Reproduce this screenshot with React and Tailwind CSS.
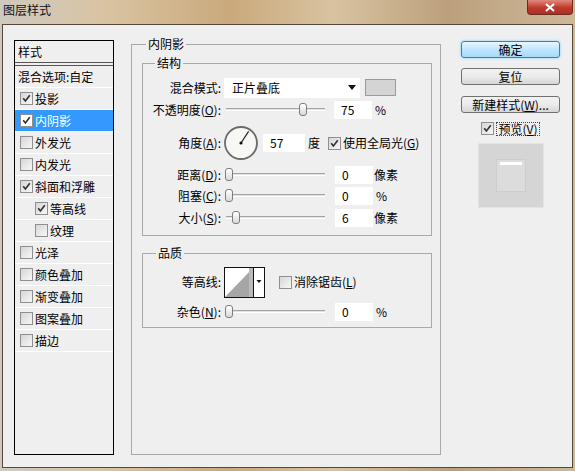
import React from "react";

function Cb({ checked, white }) {
  return (
    <span
      className={
        white
          ? "inline-flex w-[13px] h-[13px] shrink-0 items-center justify-center border border-[#8f8f8f] bg-white"
          : "inline-flex w-[13px] h-[13px] shrink-0 items-center justify-center border border-[#8f8f8f] bg-[linear-gradient(135deg,#d6d6d6,#f7f7f7)]"
      }
    >
      {checked && (
        <svg width="9" height="9" viewBox="0 0 9 9">
          <path d="M1.2 4.3 L3.4 7 L7.8 1.3" stroke="#333" strokeWidth="1.7" fill="none" />
        </svg>
      )}
    </span>
  );
}

function Slider({ thumb }) {
  return (
    <div className="relative w-[101px] h-[16px] ml-[3px] shrink-0">
      <div className="absolute left-[2px] right-0 top-[6px] h-[3px] border-t border-[#a3a3a3] border-b border-b-white bg-[#e2e2e2]" />
      <div
        className={
          "absolute top-[1px] w-[8px] h-[13px] rounded-[3px] border border-[#7d7d7d] bg-[linear-gradient(180deg,#ffffff,#d9d9d9)] " +
          thumb
        }
      />
    </div>
  );
}

function Field({ value, ml }) {
  return (
    <div className={"w-[38px] h-[18px] bg-white pl-[7px] leading-[18px] shrink-0 " + ml}>{value}</div>
  );
}

function Label({ children }) {
  return <div className="w-[78px] shrink-0 text-right whitespace-nowrap">{children}</div>;
}

const U = ({ c }) => <span className="underline underline-offset-[1px]">{c}</span>;

const items = [
  ["投影", true, false, false],
  ["内阴影", true, false, true],
  ["外发光", false, false, false],
  ["内发光", false, false, false],
  ["斜面和浮雕", true, false, false],
  ["等高线", true, true, false],
  ["纹理", false, true, false],
  ["光泽", false, false, false],
  ["颜色叠加", false, false, false],
  ["渐变叠加", false, false, false],
  ["图案叠加", false, false, false],
  ["描边", false, false, false],
];

export default function App() {
  return (
    <div className="w-[575px] h-[471px] overflow-hidden bg-[linear-gradient(90deg,#cfc9bf_0%,#d9c4a2_18%,#caa97c_40%,#d8c3a0_58%,#bca07c_78%,#cdb89a_100%)] font-['Noto_Sans_CJK_SC','Noto_Sans',sans-serif] text-[12px] text-black">
      {/* title bar */}
      <div className="h-[24px] flex justify-between">
        <div className="pl-[3px] pt-[2px] leading-[16px] text-[12px] text-[#111]">图层样式</div>
        <div className="mr-[2px] w-[46px] h-[15px] rounded-b-[4px] border border-t-0 border-[#6e2a20] bg-[linear-gradient(180deg,#e08a7c,#c0392b_55%,#a83224)] flex items-center justify-center">
          <svg width="10" height="9" viewBox="0 0 10 9">
            <path d="M1 1 L9 8 M9 1 L1 8" stroke="white" strokeWidth="2.2" />
          </svg>
        </div>
      </div>

      {/* dialog body */}
      <div className="mx-[2px] h-[444px] border border-[#54493a] bg-[#f0eff0] flex items-start">
        {/* left list */}
        <div className="ml-[11px] mt-[15px] w-[100px] h-[415px] border border-black flex flex-col">
          <div className="h-[21px] flex items-center pl-[3px] leading-[14px]">样式</div>
          <div className="h-[4px] border-t border-b border-[#555]" />
          <div className="h-[22px] flex items-center pl-[3px] border-b border-white whitespace-nowrap">混合选项:自定</div>
          {items.map(([t, c, sub, sel]) => (
            <div
              key={t}
              className={
                sel
                  ? "h-[22px] flex items-center pl-[5px] border-b border-white bg-[#3399ff] text-white"
                  : sub
                  ? "h-[22px] flex items-center pl-[20px] border-b border-white"
                  : "h-[22px] flex items-center pl-[5px] border-b border-white"
              }
            >
              <Cb checked={c} white={sel} />
              <span className="ml-[2px] leading-[14px]">{t}</span>
            </div>
          ))}
        </div>

        {/* main group */}
        <fieldset className="ml-[17px] mt-[12px] w-[310px] h-[418px] border border-[#a9a9a9]">
          <legend className="ml-[14px] px-[2px] leading-[14px]">内阴影</legend>

          {/* 结构 */}
          <fieldset className="ml-[10px] mt-[5px] w-[290px] border border-[#a9a9a9] pb-[6px]">
            <legend className="ml-[12px] px-[2px] leading-[14px]">结构</legend>
            <div className="mt-[7px] h-[21px] flex items-center">
              <Label>混合模式:</Label>
              <div className="ml-[3px] w-[136px] h-[20px] bg-white flex items-center pl-[8px]">
                <span>正片叠底</span>
                <svg className="ml-auto mr-[4px]" width="8" height="5" viewBox="0 0 8 5">
                  <path d="M0 0 H8 L4 5 Z" fill="#111" />
                </svg>
              </div>
              <div className="ml-[5px] w-[31px] h-[17px] bg-[#d4d4d4] border border-[#9a9a9a]" />
            </div>
            <div className="h-[24px] flex items-center">
              <Label>
                不透明度(<U c="O" />):
              </Label>
              <Slider thumb="left-[75px]" />
              <Field value="75" ml="ml-[9px]" />
              <span className="ml-[3px]">%</span>
            </div>
            <div className="h-[42px] flex items-center">
              <Label>
                角度(<U c="A" />):
              </Label>
              <svg className="ml-[2px] shrink-0" width="36" height="36" viewBox="0 0 36 36">
                <circle cx="18" cy="18" r="16" fill="#f7f7f3" stroke="#6b6b6b" strokeWidth="1.8" />
                <line x1="18" y1="18" x2="25.6" y2="6.3" stroke="#222" strokeWidth="1.2" />
                <circle cx="18" cy="18" r="1.6" fill="#111" />
              </svg>
              <Field value="57" ml="ml-[4px] w-[42px]" />
              <span className="ml-[3px]">度</span>
              <span className="ml-[8px] flex items-center">
                <Cb checked />
                <span className="ml-[2px]">
                  使用全局光(<U c="G" />)
                </span>
              </span>
            </div>
            <div className="h-[21px] flex items-center">
              <Label>
                距离(<U c="D" />):
              </Label>
              <Slider thumb="left-[1px]" />
              <Field value="0" ml="ml-[10px]" />
              <span className="ml-[1px]">像素</span>
            </div>
            <div className="h-[22px] flex items-center">
              <Label>
                阻塞(<U c="C" />):
              </Label>
              <Slider thumb="left-[1px]" />
              <Field value="0" ml="ml-[10px]" />
              <span className="ml-[3px]">%</span>
            </div>
            <div className="h-[22px] flex items-center">
              <Label>
                大小(<U c="S" />):
              </Label>
              <Slider thumb="left-[8px]" />
              <Field value="6" ml="ml-[10px]" />
              <span className="ml-[1px]">像素</span>
            </div>
          </fieldset>

          {/* 品质 */}
          <fieldset className="ml-[10px] mt-[10px] w-[290px] border border-[#a9a9a9] pb-[5px]">
            <legend className="ml-[13px] px-[2px] leading-[14px]">品质</legend>
            <div className="mt-[6px] h-[32px] flex items-center">
              <Label>等高线:</Label>
              <svg className="ml-[3px] shrink-0" width="41" height="31" viewBox="0 0 41 31">
                <rect x="0.5" y="0.5" width="40" height="30" fill="white" stroke="#111" />
                <path d="M1 30 L29 1 L29 30 Z" fill="#a6a6a6" />
                <rect x="25" y="1" width="4" height="29" fill="#b9b9b9" />
                <line x1="29.5" y1="1" x2="29.5" y2="30" stroke="#111" />
                <path d="M32.5 13 H37.5 L35 16 Z" fill="#111" />
              </svg>
              <span className="ml-[14px] flex items-center">
                <Cb />
                <span className="ml-[2px]">
                  消除锯齿(<U c="L" />)
                </span>
              </span>
            </div>
            <div className="mt-[4px] h-[20px] flex items-center">
              <Label>
                杂色(<U c="N" />):
              </Label>
              <Slider thumb="left-[1px]" />
              <Field value="0" ml="ml-[10px]" />
              <span className="ml-[3px]">%</span>
            </div>
          </fieldset>
        </fieldset>

        {/* right column */}
        <div className="ml-[20px] mt-[16px] w-[99px] flex flex-col items-center">
          <div className="w-[99px] h-[17px] rounded-[3px] border border-[#3c7fb1] bg-[linear-gradient(180deg,#eaf6fd,#bee6fd_50%,#a7d9f5)] shadow-[0_0_3px_#7fd0f5] flex items-center justify-center leading-[14px]">
            确定
          </div>
          <div className="mt-[10px] w-[99px] h-[17px] rounded-[3px] border border-[#707070] bg-[linear-gradient(180deg,#f2f2f2,#ebebeb_50%,#d6d6d6)] flex items-center justify-center leading-[14px]">
            复位
          </div>
          <div className="mt-[11px] w-[99px] h-[17px] rounded-[3px] border border-[#707070] bg-[linear-gradient(180deg,#f2f2f2,#ebebeb_50%,#d6d6d6)] flex items-center justify-center leading-[14px] whitespace-nowrap">
            新建样式(<U c="W" />)...
          </div>
          <div className="mt-[8px] h-[15px] flex items-center">
            <Cb checked />
            <span className="ml-[2px] px-[1px] border border-dotted border-[#444] leading-[12px]">
              预览(<U c="V" />)
            </span>
          </div>
          <div className="mt-[7px] w-[66px] h-[65px] bg-[#d5d5d5] border border-[#e4e4e4] flex items-center justify-center">
            <div className="w-[30px] h-[33px] bg-[#dcdcdc] border border-[#cdcdcd] flex flex-col items-center pt-[2px]">
              <div className="w-[22px] h-[3px] bg-white" />
            </div>
          </div>
        </div>
      </div>
    </div>
  );
}
